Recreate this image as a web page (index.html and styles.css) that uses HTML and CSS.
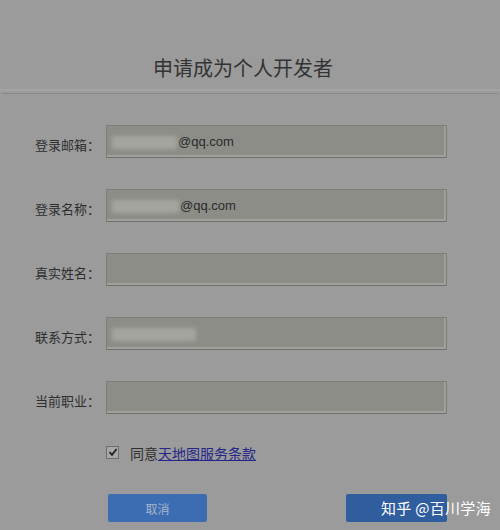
FILE: index.html
```html
<!DOCTYPE html>
<html lang="zh">
<head>
<meta charset="utf-8">
<link rel="stylesheet" href="styles.css">
</head>
<body>
<div class="page">
  <header class="header">
    <h1 class="title">申请成为个人开发者</h1>
  </header>
  <form class="form">
    <div class="row">
      <label class="label">登录邮箱：</label>
      <div class="input"><span class="blur w65"></span><span class="val">@qq.com</span></div>
    </div>
    <div class="row">
      <label class="label">登录名称：</label>
      <div class="input"><span class="blur w67"></span><span class="val">@qq.com</span></div>
    </div>
    <div class="row">
      <label class="label">真实姓名：</label>
      <div class="input"></div>
    </div>
    <div class="row">
      <label class="label">联系方式：</label>
      <div class="input"><span class="blur w84"></span></div>
    </div>
    <div class="row">
      <label class="label">当前职业：</label>
      <div class="input"></div>
    </div>
    <div class="agree">
      <span class="check"><svg viewBox="0 0 10 10" width="10" height="10"><path d="M1.5 5.2 L4 7.8 L8.6 2" fill="none" stroke="#222" stroke-width="1.8"/></svg></span>
      <span class="agree-text">同意<a class="link">天地图服务条款</a></span>
    </div>
    <div class="buttons">
      <button type="button" class="btn btn-cancel">取消</button>
      <button type="button" class="btn btn-ok"></button>
    </div>
  </form>
  <div class="watermark">知乎 @百川学海</div>
</div>
</body>
</html>
```
FILE: styles.css
```css
html, body {
  margin: 0;
  padding: 0;
  background: #9b9b9b;
}
body {
  font-family: "Noto Sans CJK SC", "Noto Sans", sans-serif;
  color: #2e2e2e;
}
.page {
  position: relative;
  width: 500px;
  height: 530px;
  overflow: hidden;
}
.header {
  height: 89px;
  border-bottom: 2px solid #a4a4a4;
  box-shadow: 0 4px 0 -2px #9b9b9b, 0 5px 0 -2px #898989;
}
.title {
  margin: 0;
  padding-top: 55px;
  font-size: 20px;
  line-height: 26px;
  font-weight: normal;
  text-align: center;
  color: #333;
  padding-right: 14px;
}
.form {
  padding-top: 34px;
  display: flex;
  flex-direction: column;
  gap: 31px;
}
.row {
  display: flex;
  align-items: center;
  gap: 6px;
  height: 33px;
}
.label {
  box-sizing: border-box;
  width: 100px;
  height: 33px;
  padding-top: 5px;
  display: flex;
  align-items: center;
  justify-content: flex-end;
  font-size: 13px;
  color: #2e2e2e;
}
.input {
  box-sizing: border-box;
  width: 341px;
  height: 33px;
  background: #8d8d88;
  border: 1px solid #7c7c78;
  border-bottom-color: #6f6f6b;
  box-shadow: inset 0 -3px 0 -1px #a09f9a, inset -3px 0 0 -1px #a09f9a;
  display: flex;
  align-items: center;
  padding-left: 5px;
}
.blur {
  display: inline-block;
  height: 13px;
  background: #a5a5a0;
  filter: blur(2px);
  margin-top: 1px;
}
.w65 { width: 65px; }
.w67 { width: 67px; }
.w84 { width: 84px; }
.val {
  font-size: 13px;
  color: #2a2a2a;
  font-family: "Liberation Sans", Arial, sans-serif;
  margin-left: 1px;
}
.agree {
  margin-top: -2px;
  display: flex;
  align-items: center;
  padding-left: 106px;
  height: 20px;
}
.check {
  width: 11px;
  height: 11px;
  border: 1px solid #6e6e6e;
  background: #a8a8a8;
  display: flex;
  align-items: center;
  justify-content: center;
  margin-top: -2px;
}
.agree-text {
  margin-left: 11px;
  font-size: 14px;
  color: #2e2e2e;
}
.link {
  color: #26268a;
  text-decoration: underline;
}
.buttons {
  display: flex;
  padding-left: 108px;
  gap: 139px;
}
.btn {
  width: 99px;
  height: 28px;
  border: none;
  border-radius: 2px;
  font-family: "Noto Sans CJK SC", sans-serif;
  font-size: 12px;
  padding: 0;
}
.btn-cancel {
  background: #3c6db2;
  color: #a9b6cc;
}
.btn-ok {
  width: 101px;
  background: #2f5d9e;
}
.watermark {
  position: absolute;
  left: 381px;
  top: 496px;
  font-size: 15px;
  line-height: 24px;
  color: #ffffff;
  letter-spacing: 0.3px;
}
```
